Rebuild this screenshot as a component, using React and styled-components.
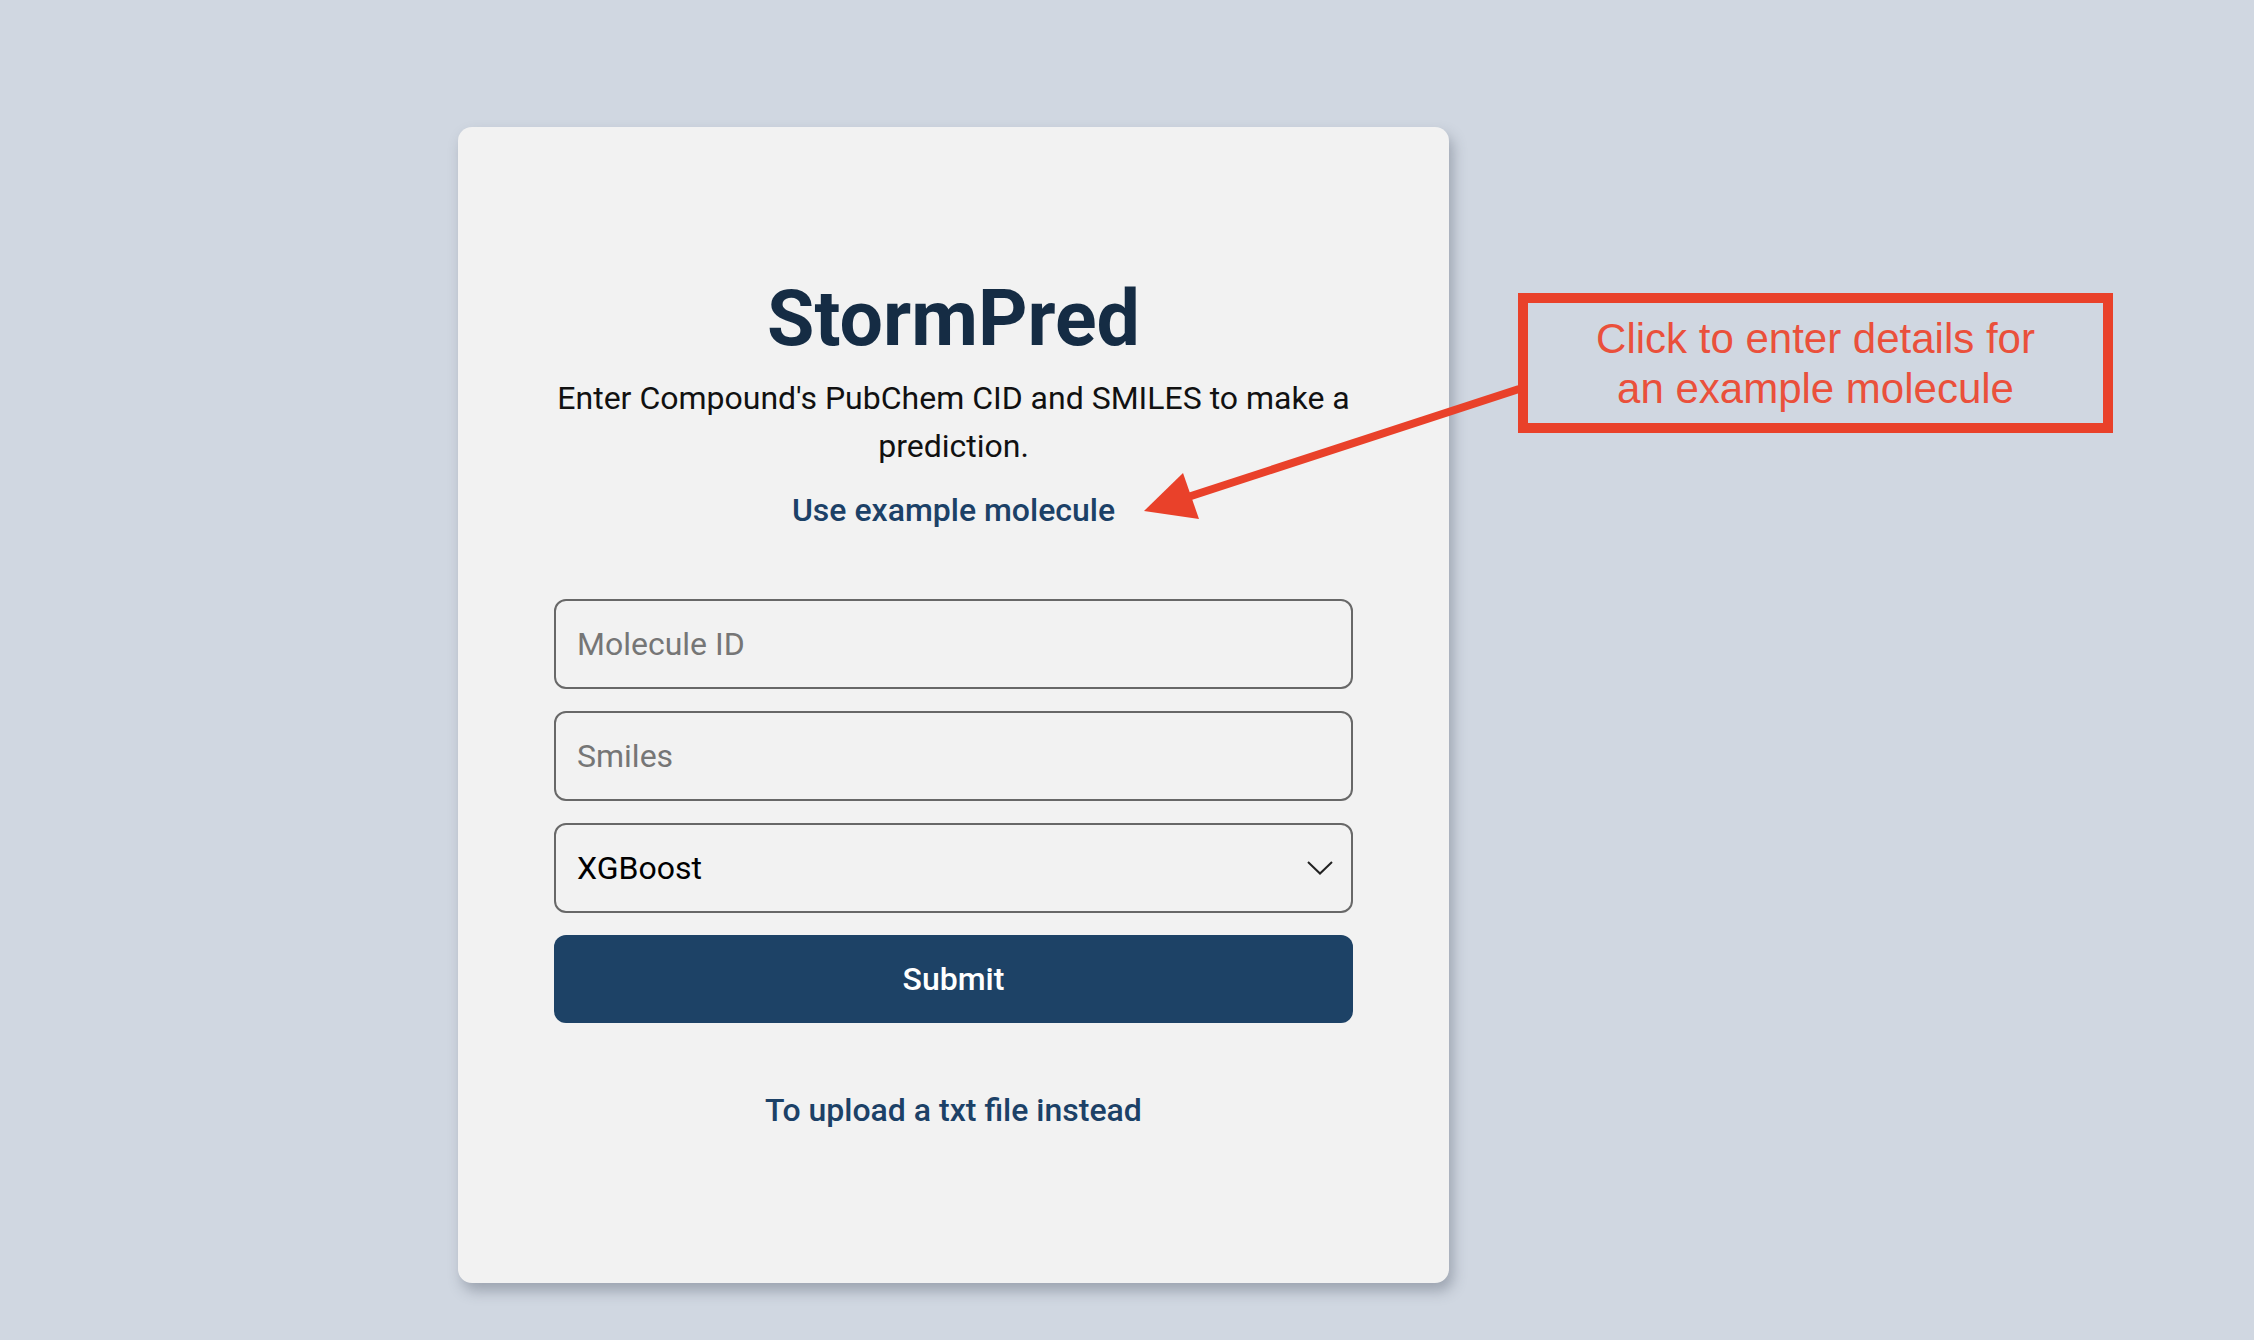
import React, { useState } from 'react';
import styled, { createGlobalStyle } from 'styled-components';

const GlobalStyle = createGlobalStyle`
    html, body {
        margin: 0;
        padding: 0;
        background-color: #d0d7e1;
        font-family: Roboto, "Noto Sans", Arial, sans-serif;
    }

    * {
        box-sizing: border-box;
    }
`;

const Page = styled.div`
    position: relative;
    min-height: 100vh;
    display: flex;
    align-items: flex-start;
    gap: 69px;
    padding: 127px 0 0 458px;
`;

const Card = styled.div`
    width: 991px;
    height: 1156px;
    padding: 154px 96px 0;
    background-color: #f2f2f2;
    border-radius: 14px;
    box-shadow: 4px 8px 14px rgba(60, 70, 85, 0.35);
    display: flex;
    flex-direction: column;
    align-items: center;
`;

const Title = styled.h1`
    margin: 0;
    font-size: 77px;
    line-height: 77px;
    font-weight: 700;
    color: #152c44;
`;

const Intro = styled.p`
    margin: 16px 0 0;
    font-size: 32px;
    line-height: 48px;
    color: #111;
    text-align: center;
`;

const LinkButton = styled.button`
    margin-top: ${(p) => p.$top}px;
    padding: 0;
    border: none;
    background: none;
    font-family: inherit;
    font-size: 32px;
    line-height: 48px;
    font-weight: 500;
    color: #1c4167;
    cursor: pointer;
`;

const Form = styled.form`
    width: 100%;
    margin-top: 65px;
    display: flex;
    flex-direction: column;
    gap: 22px;
`;

const Field = styled.input`
    width: 100%;
    height: 90px;
    padding: 0 21px;
    border: 2px solid #686868;
    border-radius: 12px;
    background: transparent;
    font-family: inherit;
    font-size: 32px;
    color: #111;
    outline: none;

    &::placeholder {
        color: #767676;
    }
`;

const SelectWrap = styled.div`
    position: relative;
    width: 100%;

    svg {
        position: absolute;
        right: 20px;
        top: 38px;
        pointer-events: none;
    }
`;

const Select = styled.select`
    width: 100%;
    height: 90px;
    padding: 0 21px;
    border: 2px solid #686868;
    border-radius: 12px;
    background: transparent;
    font-family: inherit;
    font-size: 32px;
    color: #000;
    appearance: none;
    outline: none;
`;

const Submit = styled.button`
    width: 100%;
    height: 88px;
    border: none;
    border-radius: 12px;
    background-color: #1d4266;
    color: #fff;
    font-family: inherit;
    font-size: 32px;
    font-weight: 500;
    cursor: pointer;
`;

const Callout = styled.div`
    margin-top: 166px;
    width: 595px;
    height: 140px;
    padding: 11px 0 9px;
    border: 10px solid #e9412a;
    font-family: "Liberation Sans", Arial, sans-serif;
    font-size: 42px;
    line-height: 50px;
    color: #ea503b;
    text-align: center;
`;

const Overlay = styled.svg`
    position: absolute;
    left: 0;
    top: 0;
    pointer-events: none;
`;

export default function App() {
    const [ id, setId ] = useState('');
    const [ smiles, setSmiles ] = useState('');

    const useExample = () => {
        setId('');
        setSmiles('');
    };

    return (
        <>
            <GlobalStyle />
            <Page>
                <Card>
                    <Title>StormPred</Title>
                    <Intro>Enter Compound's PubChem CID and SMILES to make a<br />prediction.</Intro>
                    <LinkButton $top={16} onClick={useExample}>Use example molecule</LinkButton>

                    <Form onSubmit={(e) => e.preventDefault()}>
                        <Field placeholder="Molecule ID" value={id} onChange={(e) => setId(e.target.value)} />
                        <Field placeholder="Smiles" value={smiles} onChange={(e) => setSmiles(e.target.value)} />
                        <SelectWrap>
                            <Select defaultValue="xgboost">
                                <option value="xgboost">XGBoost</option>
                            </Select>
                            <svg width="26" height="14" viewBox="0 0 26 14">
                                <path d="M1 1 L13 12.5 L25 1" fill="none" stroke="#222" strokeWidth="2" />
                            </svg>
                        </SelectWrap>
                        <Submit type="submit">Submit</Submit>
                    </Form>

                    <LinkButton $top={63}>To upload a txt file instead</LinkButton>
                </Card>

                <Callout>
                    Click to enter details for<br />an example molecule
                </Callout>

                <Overlay width="2254" height="1340" viewBox="0 0 2254 1340">
                    <line x1="1519" y1="389" x2="1188" y2="497" stroke="#e9412a" strokeWidth="8" />
                    <polygon points="1144,511 1183,473 1199,519" fill="#e9412a" />
                </Overlay>
            </Page>
        </>
    );
}
